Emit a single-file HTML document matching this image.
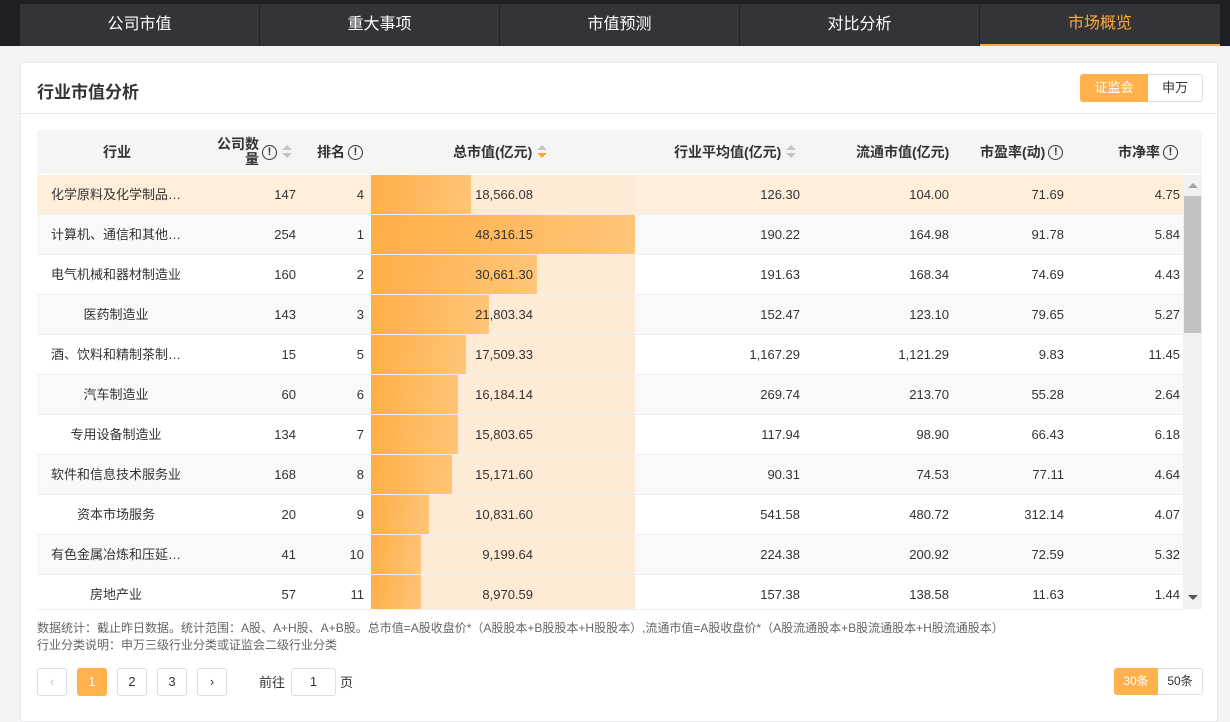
<!DOCTYPE html><html><head><meta charset="utf-8"><style>
*{margin:0;padding:0;box-sizing:border-box}
body{width:1230px;height:708px;overflow:hidden;background:#f4f4f5;font-family:"Liberation Sans","Noto Sans CJK SC",sans-serif;color:#333;position:relative}
.nav{position:absolute;left:0;top:0;width:1230px;height:46px;background:#1f2024}
.tab{position:absolute;top:4px;height:42px;width:240px;background:#333438;border-right:1px solid #222;color:#fff;font-size:16px;text-align:center;line-height:42px}
.tab.act{color:#ffa93a;border-bottom:2px solid #ffa93a;line-height:40px}
.card{position:absolute;left:20px;top:62px;width:1198px;height:660px;background:#fff;border:1px solid #e8e8ee}
.abs{position:absolute}
.row{position:absolute;left:37px;width:1146px;height:40px;border-bottom:1px solid #ebeef5;font-size:13px;line-height:40px;overflow:hidden}
.row div{position:absolute;top:0}
.r{text-align:right}
.ic{display:inline-block;width:15px;height:15px;border:1.3px solid #333;border-radius:50%;font-size:11px;line-height:12px;text-align:center;font-weight:bold;margin-left:3px}
.sort{display:inline-block;margin-left:5px;width:10px;height:14px;position:relative}
.sort:before{content:"";position:absolute;left:0;top:0;border:5px solid transparent;border-bottom-color:#c0c4cc;border-top:0}
.sort:after{content:"";position:absolute;left:0;top:8px;border:5px solid transparent;border-top-color:#c0c4cc;border-bottom:0}
.sort.on:after{border-top-color:#ffa93a}
.hd{position:absolute;top:130px;left:37px;width:1165px;height:44px;background:#f5f5f5;font-size:14px;font-weight:bold;color:#333}
.hd>div{position:absolute;top:0;height:44px;display:flex;align-items:center}
.pb{position:absolute;top:668px;width:30px;height:28px;border:1px solid #dcdfe6;border-radius:3px;text-align:center;line-height:26px;font-size:13px;background:#fff}
</style></head><body>
<div class="nav">
<div class="tab" style="left:20px">公司市值</div>
<div class="tab" style="left:260px">重大事项</div>
<div class="tab" style="left:500px">市值预测</div>
<div class="tab" style="left:740px">对比分析</div>
<div class="tab act" style="left:980px;border-right:0">市场概览</div>
</div>
<div class="card"></div>
<div class="abs" style="left:37px;top:78px;font-size:17px;font-weight:bold;color:#333">行业市值分析</div>
<div class="abs" style="left:21px;top:113px;width:1197px;height:1px;background:#e6e6ea"></div>
<div class="abs" style="left:1080px;top:74px;width:68px;height:28px;background:#ffb14b;color:#fff;font-size:13px;text-align:center;line-height:28px;border-radius:3px 0 0 3px">证监会</div>
<div class="abs" style="left:1148px;top:74px;width:55px;height:28px;border:1px solid #dcdfe6;border-left:0;font-size:13px;text-align:center;line-height:26px;border-radius:0 3px 3px 0">申万</div>
<div class="hd">
<div style="left:66px">行业</div>
<div style="left:176px"><span style="display:inline-block;line-height:15px;text-align:right;width:46px">公司数<br>量</span><span class="ic">!</span><span class="sort"></span></div>
<div style="left:280px">排名<span class="ic">!</span></div>
<div style="left:416px">总市值(亿元)<span class="sort on"></span></div>
<div style="left:637px">行业平均值(亿元)<span class="sort"></span></div>
<div style="left:819px">流通市值(亿元)</div>
<div style="left:943px">市盈率(动)<span class="ic">!</span></div>
<div style="left:1081px">市净率<span class="ic">!</span></div>
</div>
<div id="rows"></div>
<div class="abs" style="left:1183px;top:175px;width:19px;height:434px;background:#f1f1f1"></div>
<div class="abs" style="left:1184px;top:196px;width:17px;height:137px;background:#c1c1c1"></div>
<div class="abs" style="left:1188px;top:183px;border:5px solid transparent;border-bottom-color:#a3a3a3;border-top:0"></div>
<div class="abs" style="left:1188px;top:595px;border:5px solid transparent;border-top-color:#555;border-bottom:0"></div>
<div class="abs" style="left:37px;top:620px;font-size:12px;color:#666;line-height:17px">数据统计：截止昨日数据。统计范围：A股、A+H股、A+B股。总市值=A股收盘价*（A股股本+B股股本+H股股本）,流通市值=A股收盘价*（A股流通股本+B股流通股本+H股流通股本）<br>行业分类说明：申万三级行业分类或证监会二级行业分类</div>
<div class="pb" style="left:37px;color:#c0c4cc">‹</div>
<div class="pb" style="left:77px;background:#ffb14b;border-color:#ffb14b;color:#fff">1</div>
<div class="pb" style="left:117px">2</div>
<div class="pb" style="left:157px">3</div>
<div class="pb" style="left:197px">›</div>
<div class="abs" style="left:259px;top:672px;font-size:13px">前往</div>
<div class="pb" style="left:291px;width:45px">1</div>
<div class="abs" style="left:340px;top:672px;font-size:13px">页</div>
<div class="abs" style="left:1114px;top:668px;width:44px;height:27px;background:#ffb14b;color:#fff;font-size:12px;text-align:center;line-height:27px;border-radius:3px 0 0 3px">30条</div>
<div class="abs" style="left:1158px;top:668px;width:45px;height:27px;border:1px solid #dcdfe6;border-left:0;font-size:12px;text-align:center;line-height:25px;border-radius:0 3px 3px 0">50条</div>
<script>
var d=[["化学原料及化学制品…",147,4,"18,566.08",100,"126.30","104.00","71.69","4.75"],
["计算机、通信和其他…",254,1,"48,316.15",264,"190.22","164.98","91.78","5.84"],
["电气机械和器材制造业",160,2,"30,661.30",166,"191.63","168.34","74.69","4.43"],
["医药制造业",143,3,"21,803.34",118,"152.47","123.10","79.65","5.27"],
["酒、饮料和精制茶制…",15,5,"17,509.33",95,"1,167.29","1,121.29","9.83","11.45"],
["汽车制造业",60,6,"16,184.14",87,"269.74","213.70","55.28","2.64"],
["专用设备制造业",134,7,"15,803.65",87,"117.94","98.90","66.43","6.18"],
["软件和信息技术服务业",168,8,"15,171.60",81,"90.31","74.53","77.11","4.64"],
["资本市场服务",20,9,"10,831.60",58,"541.58","480.72","312.14","4.07"],
["有色金属冶炼和压延…",41,10,"9,199.64",50,"224.38","200.92","72.59","5.32"],
["房地产业",57,11,"8,970.59",50,"157.38","138.58","11.63","1.44"]];
var h="";d.forEach(function(r,i){var bg=i==0?"#ffeeda":(i%2?"#f9f9f9":"#fff");var y=175+i*40;var lastH=i==10?35:40;
h+='<div class="row" style="top:'+y+'px;height:'+lastH+'px;background:'+bg+'">'+
'<div style="left:0;width:158px;text-align:center">'+r[0]+'</div>'+
'<div class="r" style="left:200px;width:59px">'+r[1]+'</div>'+
'<div class="r" style="left:280px;width:47px">'+r[2]+'</div>'+
'<div style="left:334px;width:264px;height:39px;background:#fdebd5"></div>'+
'<div style="left:334px;width:'+r[4]+'px;height:39px;background:linear-gradient(100deg,#ffae45,#ffc57a)"></div>'+
'<div class="r" style="left:400px;width:96px">'+r[3]+'</div>'+
'<div class="r" style="left:600px;width:163px">'+r[5]+'</div>'+
'<div class="r" style="left:780px;width:132px">'+r[6]+'</div>'+
'<div class="r" style="left:930px;width:97px">'+r[7]+'</div>'+
'<div class="r" style="left:1040px;width:103px">'+r[8]+'</div></div>';});
document.getElementById("rows").innerHTML=h;
</script>
</body></html>
